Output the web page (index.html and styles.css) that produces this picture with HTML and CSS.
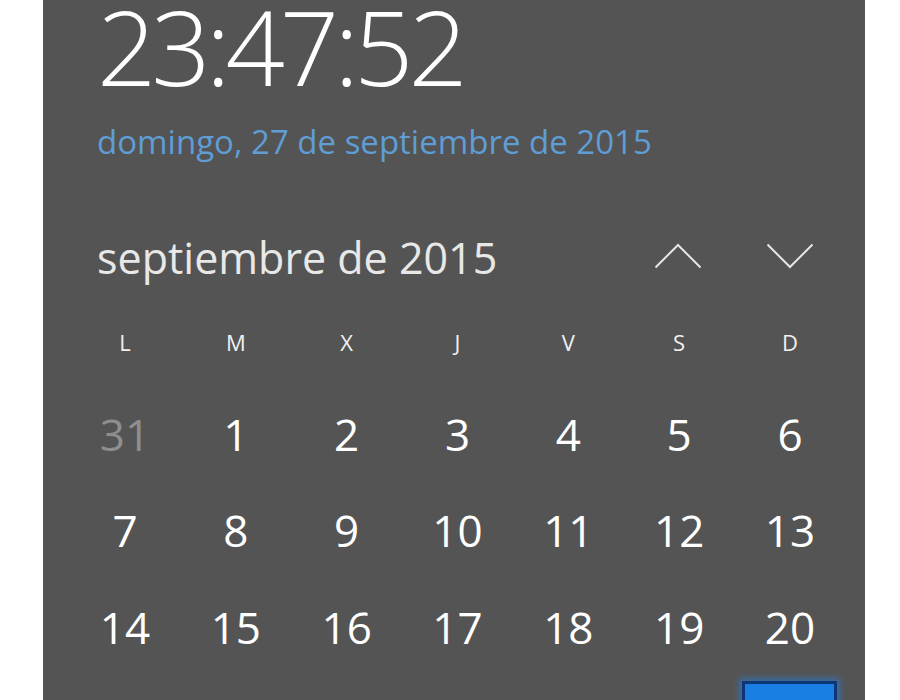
FILE: index.html
```html
<!DOCTYPE html>
<html lang="es">
<head>
<meta charset="utf-8">
<title>Reloj y calendario</title>
<link rel="stylesheet" href="styles.css">
</head>
<body>
<div class="panel">
  <div class="clock">
    <div class="time">23:47:52</div>
    <div class="date">domingo, 27 de septiembre de 2015</div>
  </div>
  <div class="month-bar">
    <div class="month">septiembre de 2015</div>
    <div class="nav">
      <svg class="chev" width="48" height="26" viewBox="0 0 48 26"><path d="M1.5 24.5 L24 2 L46.5 24.5" fill="none" stroke="#e6e6e6" stroke-width="2"/></svg>
      <svg class="chev" width="48" height="26" viewBox="0 0 48 26"><path d="M1.5 1.5 L24 24 L46.5 1.5" fill="none" stroke="#e6e6e6" stroke-width="2"/></svg>
    </div>
  </div>
  <div class="weekdays">
    <span>L</span><span>M</span><span>X</span><span>J</span><span>V</span><span>S</span><span>D</span>
  </div>
  <div class="days">
    <span class="other">31</span><span>1</span><span>2</span><span>3</span><span>4</span><span>5</span><span>6</span>
    <span>7</span><span>8</span><span>9</span><span>10</span><span>11</span><span>12</span><span>13</span>
    <span>14</span><span>15</span><span>16</span><span>17</span><span>18</span><span>19</span><span>20</span>
    <span>21</span><span>22</span><span>23</span><span>24</span><span>25</span><span>26</span><span class="today"><b>27</b></span>
  </div>
</div>
</body>
</html>
```

FILE: styles.css
```css
html, body {
  margin: 0;
  padding: 0;
  background: #ffffff;
  overflow: hidden;
}
body {
  width: 900px;
  height: 700px;
  font-family: "Open Sans", "Noto Sans", "DejaVu Sans", sans-serif;
}
.panel {
  margin-left: 43px;
  width: 822px;
  height: 700px;
  background: #545454;
  overflow: hidden;
}
.clock {
  padding-left: 54px;
}
.time {
  height: 98px;
  font-size: 104px;
  line-height: 92px;
  font-weight: 300;
  color: #ffffff;
  letter-spacing: -5px;
}
.date {
  margin-top: 22px;
  height: 44px;
  font-size: 33px;
  line-height: 44px;
  color: #5f9dd5;
}
.month-bar {
  margin-top: 65px;
  display: flex;
  align-items: flex-start;
  justify-content: space-between;
  padding-left: 54px;
  padding-right: 51px;
}
.month {
  height: 58px;
  font-size: 43px;
  line-height: 58px;
  color: #e8e8e8;
}
.nav {
  display: flex;
  gap: 64px;
  margin-top: 14px;
}
.chev {
  display: block;
}
.weekdays, .days {
  margin-left: 26.6px;
  width: 775.8px;
  display: grid;
  grid-template-columns: repeat(7, 1fr);
}
.weekdays {
  margin-top: 29.5px;
  height: 50px;
  color: #f0f0f0;
  font-size: 22px;
}
.weekdays span, .days span {
  display: flex;
  align-items: center;
  justify-content: center;
}
.days {
  margin-top: 18.75px;
  grid-auto-rows: 96.5px;
  font-size: 44px;
  color: #ffffff;
}
.days .other {
  color: #8e8e8e;
}
.days .today {
  align-items: stretch;
  justify-content: stretch;
}
.days .today b {
  flex: 1;
  margin: 6px 8px 6px 7px;
  border: 3px solid #0c3676;
  background: #1a7fe2;
  box-shadow: 0 0 6px 3px rgba(40, 130, 230, 0.55);
  font-weight: 400;
  display: flex;
  align-items: center;
  justify-content: center;
}
```
